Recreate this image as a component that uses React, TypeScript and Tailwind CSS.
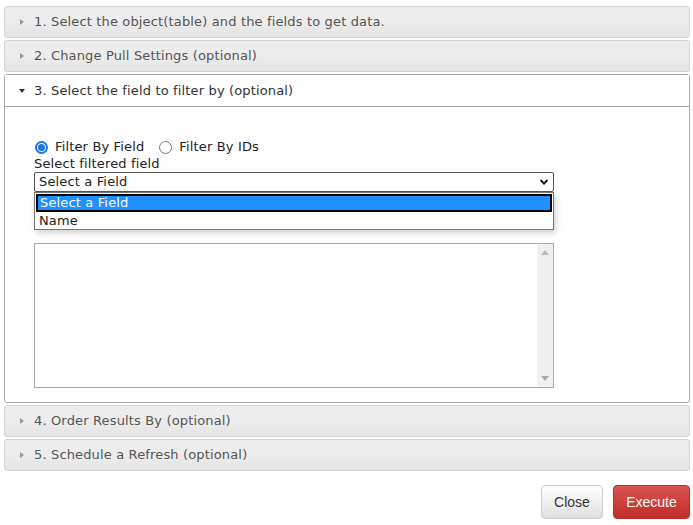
import React from 'react';

const font = { fontFamily: '"DejaVu Sans", Verdana, sans-serif' };

const Closed = ({ label }: { label: string }) => (
  <div className="h-[32px] flex items-center pl-[12px] rounded-[3px] border border-[#d3d3d3] bg-[linear-gradient(#ededed_0%,#ececec_50%,#e4e4e4_100%)] text-[#555] text-[13px] tracking-[0.15px]">
    <svg width="10" height="10" viewBox="0 0 10 10" className="mr-[7px]">
      <path d="M3 2 L7 5 L3 8 Z" fill="#999" />
    </svg>
    <span>{label}</span>
  </div>
);

export default function App() {
  return (
    <div className="w-[693px] h-[525px] bg-white pt-[6px] px-[4px] pr-[3px]" style={font}>
      <div className="flex flex-col gap-[2px]">
        <Closed label="1. Select the object(table) and the fields to get data." />
        <Closed label="2. Change Pull Settings (optional)" />
        <div className="border border-[#aaa] rounded-[3px]">
          <div className="h-[32px] flex items-center pl-[12px] border-b border-[#aaa] bg-white text-[#333] text-[13px] tracking-[0.15px]">
            <svg width="10" height="10" viewBox="0 0 10 10" className="mr-[7px]">
              <path d="M2 3 L8 3 L5 7 Z" fill="#333" />
            </svg>
            <span>3. Select the field to filter by (optional)</span>
          </div>
          <div className="h-[295px] pl-[29px] pt-[32px] text-[13px] text-[#222] tracking-[0.15px]">
            <div className="flex items-center h-[16px] mb-[1px]">
              <span className="w-[13px] h-[13px] rounded-full border-[2px] border-[#1a73e8] flex items-center justify-center mr-[7px] ml-[1px]">
                <span className="w-[7px] h-[7px] rounded-full bg-[#1a73e8]" />
              </span>
              <span>Filter By Field</span>
              <span className="w-[13px] h-[13px] rounded-full border border-[#767676] ml-[15px] mr-[7px]" />
              <span>Filter By IDs</span>
            </div>
            <div className="h-[16px] leading-[16px]">Select filtered field</div>
            <div className="relative w-[520px]">
              <div className="h-[20px] border border-[#555] rounded-[2px] flex items-center justify-between pl-[4px] pr-[4px]">
                <span>Select a Field</span>
                <svg width="10" height="8" viewBox="0 0 10 8">
                  <path d="M1.5 2 L5 5.5 L8.5 2" stroke="#222" strokeWidth="2" fill="none" />
                </svg>
              </div>
              <div className="absolute left-0 top-[20px] w-[520px] border border-[#767676] bg-white shadow-[2px_3px_6px_rgba(0,0,0,0.18)] z-10">
                <div className="h-[18px] bg-[#1e90ff] border-2 border-black text-white pl-[2px] leading-[14px] mt-[1px] mx-[1px]">Select a Field</div>
                <div className="h-[17px] pl-[4px] leading-[17px] text-[#222]">Name</div>
              </div>
              <div className="mt-[51px] h-[145px] border border-[#aaa] flex justify-end">
                <div className="w-[16px] bg-[#f0f0f0] flex flex-col items-center justify-between py-[6px]">
                  <svg width="8" height="5" viewBox="0 0 8 5"><path d="M0 5 L4 0 L8 5 Z" fill="#bbb" /></svg>
                  <svg width="8" height="5" viewBox="0 0 8 5"><path d="M0 0 L4 5 L8 0 Z" fill="#aaa" /></svg>
                </div>
              </div>
            </div>
          </div>
        </div>
        <Closed label="4. Order Results By (optional)" />
        <Closed label="5. Schedule a Refresh (optional)" />
      </div>
      <div className="flex justify-end gap-[10px] mt-[14px]" style={{ fontFamily: '"Liberation Sans", Arial, sans-serif' }}>
        <button className="w-[62px] h-[34px] rounded-[4px] border border-[#ccc] bg-[linear-gradient(#fff,#e0e0e0)] text-[#333] text-[14px]">Close</button>
        <button className="w-[77px] h-[34px] rounded-[4px] border border-[#b92c28] bg-[linear-gradient(#d9534f,#c12e2a)] text-white text-[14px]">Execute</button>
      </div>
    </div>
  );
}
